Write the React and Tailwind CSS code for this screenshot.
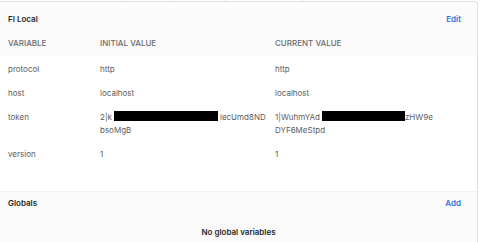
import React from 'react';

const rows = [
  { name: 'protocol', initial: ['http'], current: ['http'] },
  { name: 'host', initial: ['localhost'], current: ['localhost'] },
  {
    name: 'token',
    initial: [
      <span key="a" className="whitespace-nowrap">
        2|k
        <span className="inline-block align-middle bg-black w-[104px] h-[10px] ml-[2px] mr-[2px] -mt-[2px]"></span>
        lecUmd8ND
      </span>,
      'bsoMgB',
    ],
    current: [
      <span key="b" className="whitespace-nowrap">
        1|WuhmYAd
        <span className="inline-block align-middle bg-black w-[83px] h-[10px] ml-[2px] -mt-[2px]"></span>
        zHW9e
      </span>,
      'DYF6MeStpd',
    ],
  },
  { name: 'version', initial: ['1'], current: ['1'] },
];

export default function App() {
  return (
    <div className="w-[480px] h-[242px] overflow-hidden bg-white font-[Inter,sans-serif] text-[8px] leading-[13px]">
      {/* table above, cut off */}
      <div className="flex h-[1px]">
        <div className="w-[124px] border-r border-[#e6e6e6]"></div>
        <div className="w-[50px] border-r border-[#e6e6e6]"></div>
        <div className="w-[51px] border-r border-[#e6e6e6]"></div>
        <div className="w-[79px] border-r border-[#e6e6e6]"></div>
      </div>

      <div className="w-[478px] border-t border-r border-[#dedede] rounded-tr-[4px] pt-[5px]">
        {/* environment header */}
        <div className="bg-[#fafafa] pt-[6px] pb-[6px]">
          <div className="flex justify-between pl-[8px] pr-[16px]">
            <span className="font-semibold text-[#262626]">FI Local</span>
            <span className="font-semibold text-[#2f74d6]">Edit</span>
          </div>
          <div className="grid grid-cols-[92px_175px_1fr] pl-[8px] mt-[11px] text-[#6b6b6b] font-medium">
            <span>VARIABLE</span>
            <span>INITIAL VALUE</span>
            <span>CURRENT VALUE</span>
          </div>
        </div>

        {/* variables */}
        <div className="pt-[1px] pb-[25px] text-[#5c5c5c]">
          {rows.map((r) => (
            <div key={r.name} className="grid grid-cols-[92px_175px_1fr] pl-[8px] py-[5.5px]">
              <span>{r.name}</span>
              <div className="flex flex-col">
                {r.initial.map((l, i) => (
                  <span key={i}>{l}</span>
                ))}
              </div>
              <div className="flex flex-col">
                {r.current.map((l, i) => (
                  <span key={i}>{l}</span>
                ))}
              </div>
            </div>
          ))}
        </div>

        {/* globals */}
        <div className="bg-[#fafafa] border-t border-[#f0f0f0] pt-[5px] pb-[10px]">
          <div className="flex justify-between pl-[8px] pr-[16px]">
            <span className="font-semibold text-[#262626]">Globals</span>
            <span className="font-semibold text-[#2f74d6]">Add</span>
          </div>
          <div className="mt-[16px] text-center font-semibold text-[#262626]">No global variables</div>
        </div>
      </div>
    </div>
  );
}
